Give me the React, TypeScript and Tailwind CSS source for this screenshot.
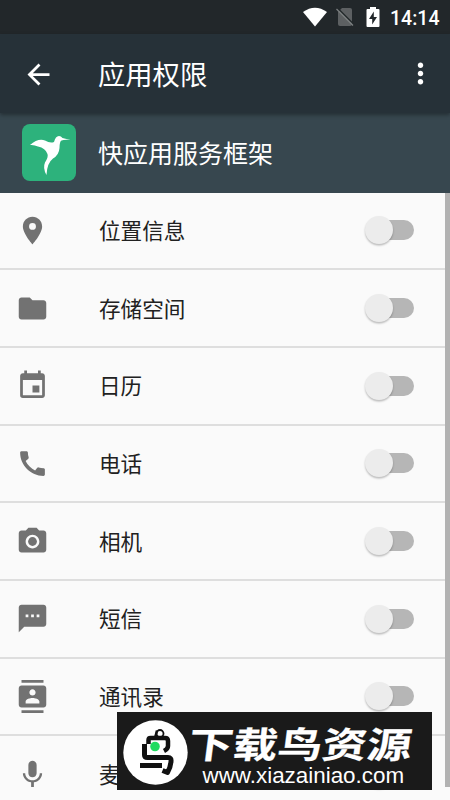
import type { IconType } from 'react-icons';
import {
  MdArrowBack,
  MdCall,
  MdContacts,
  MdEvent,
  MdFolder,
  MdMic,
  MdMoreVert,
  MdPhotoCamera,
  MdPlace,
  MdTextsms,
} from 'react-icons/md';

const permissions: { label: string; icon: IconType }[] = [
  { label: '位置信息', icon: MdPlace },
  { label: '存储空间', icon: MdFolder },
  { label: '日历', icon: MdEvent },
  { label: '电话', icon: MdCall },
  { label: '相机', icon: MdPhotoCamera },
  { label: '短信', icon: MdTextsms },
  { label: '通讯录', icon: MdContacts },
  { label: '麦克风', icon: MdMic },
];

const StatusBar = () => (
  <div className="h-[34px] shrink-0 bg-[#22272a] flex items-center justify-end pr-[11px] text-white">
    <svg className="w-6 h-5 mr-[9px]" viewBox="0 0 24 20" fill="currentColor">
      <path d="M0 5Q12-3.600 24 5L12 19.500z" />
    </svg>
    <svg className="w-[18px] h-5 mr-3" viewBox="0 0 18 20">
      <path d="M6 1H14q2 0 2 2v14q0 2-2 2H4q-2 0-2-2V5z" fill="#5d6062" />
      <path d="M2 1.500 18 17.500" stroke="#22272a" strokeWidth="1.500" />
      <path d="M0.500 2 17 18.500" stroke="#7c7f81" strokeWidth="1.300" />
    </svg>
    <svg className="w-[14px] h-[22px] mr-2.5" viewBox="0 0 14 22">
      <path d="M4 1h6v2h2.500q1 0 1 1v16q0 1-1 1h-11q-1 0-1-1V4q0-1 1-1H4z" fill="#fff" />
      <path d="M7.800 5.500 3 13h3.200v5.500L11 11H7.800z" fill="#22272a" />
    </svg>
    <span className="font-[Roboto] font-medium text-[19.500px] leading-none pt-[3px] w-[49px] whitespace-nowrap">
      14:14
    </span>
  </div>
);

const Toggle = () => (
  <div className="relative w-[50px] h-7">
    <div className="absolute left-[8px] top-1 w-[41px] h-5 rounded-full bg-[#b6b6b6]" />
    <div className="absolute left-0 top-0 w-7 h-7 rounded-full bg-[#ececec] shadow-[0_1.5px_2px_rgba(0,0,0,0.25)]" />
  </div>
);

const Watermark = () => (
  <div className="absolute left-[117px] top-[712px] w-[315px] h-[78px] bg-[#1a1a1a] flex text-white">
    <svg className="w-[65px] h-[65px] ml-[5.500px] mt-[8px] shrink-0" viewBox="0 0 65 65">
      <circle cx="32.500" cy="32.500" r="32.200" fill="#fff" />
      <g fill="none" stroke="#111" strokeLinejoin="round">
        <circle cx="37" cy="13.500" r="3.500" strokeWidth="1.800" />
        <path d="M34 10.500 32 18" strokeWidth="2.500" />
        <path d="M25.500 24V20q0-2 2-2H42q3 0 3 3v5q0 3-4 5" strokeWidth="4.500" />
        <path d="M21.500 24V35q0 2.500 3 2.500H45q3.500 0 3 4-.5 6-3.500 11l-5-2" strokeWidth="5" />
        <path d="M17 45.500H39" strokeWidth="5" />
      </g>
      <circle cx="32" cy="26.500" r="4.800" fill="#20db60" />
    </svg>
    <div className="relative w-[240px]">
      <div className="absolute left-[1px] top-[8px] origin-left scale-x-[1.24] -skew-x-6 font-['Noto_Sans_CJK_SC',sans-serif] font-bold [-webkit-text-stroke:0.2px_white] text-[36px] leading-[44px] whitespace-nowrap">
        下载鸟资源
      </div>
      <div className="absolute left-[15px] top-[52px] font-['Liberation_Sans',sans-serif] text-[22.400px] leading-6 whitespace-nowrap">
        www.xiazainiao.com
      </div>
    </div>
  </div>
);

export default function App() {
  return (
    <main className="relative w-[450px] h-[800px] overflow-hidden flex flex-col bg-[#fafafa] font-['Noto_Sans_CJK_SC',sans-serif]">
      <StatusBar />

      <header className="relative z-10 h-[79px] shrink-0 bg-[#263138] flex items-center pl-[22px] pr-[13px] text-white shadow-[0_2px_4px_rgba(0,0,0,0.35)]">
        <MdArrowBack className="w-[33px] h-[33px] mt-px" />
        <h1 className="flex-1 ml-[43px] text-[27.300px] leading-none">应用权限</h1>
        <MdMoreVert className="w-[33px] h-[33px]" />
      </header>

      <div className="h-[79.500px] shrink-0 bg-[#37474f] flex items-center pl-[22px] text-white">
        <svg className="w-[54px] h-[57px]" viewBox="0 0 54 57">
          <rect width="54" height="57" rx="8" fill="#2db27c" />
          <path
            d="M8 21Q16 14 23 16.500Q28 19.500 32 18Q33.500 12 37 12Q39 12 40.500 14L48.500 16Q42 15.500 39.500 16.500Q37.500 17.500 37.500 24Q37 31 31 34.500Q25 39 24.500 51Q20.500 44 23 38.500Q26.500 33 25.500 30Q23.500 24 16 22.500Q12 20.500 8 21z"
            fill="#fff"
          />
        </svg>
        <h2 className="ml-[22px] text-[25px] leading-none">快应用服务框架</h2>
      </div>

      <ul className="shrink-0">
        {permissions.map(({ label, icon: Icon }) => (
          <li
            key={label}
            className="h-[77.700px] border-b-2 border-[#dedede] flex items-center pl-[16px] pr-[35px]"
          >
            <Icon className="w-[33px] h-[33px] text-[#727272]" />
            <span className="flex-1 ml-[50px] pb-px text-[21.600px] leading-none text-[#212121]">{label}</span>
            <Toggle />
          </li>
        ))}
      </ul>

      <Watermark />
      <div className="absolute right-0 top-[193px] w-[5.500px] h-[594px] bg-[#b2b2b2]" />
    </main>
  );
}
